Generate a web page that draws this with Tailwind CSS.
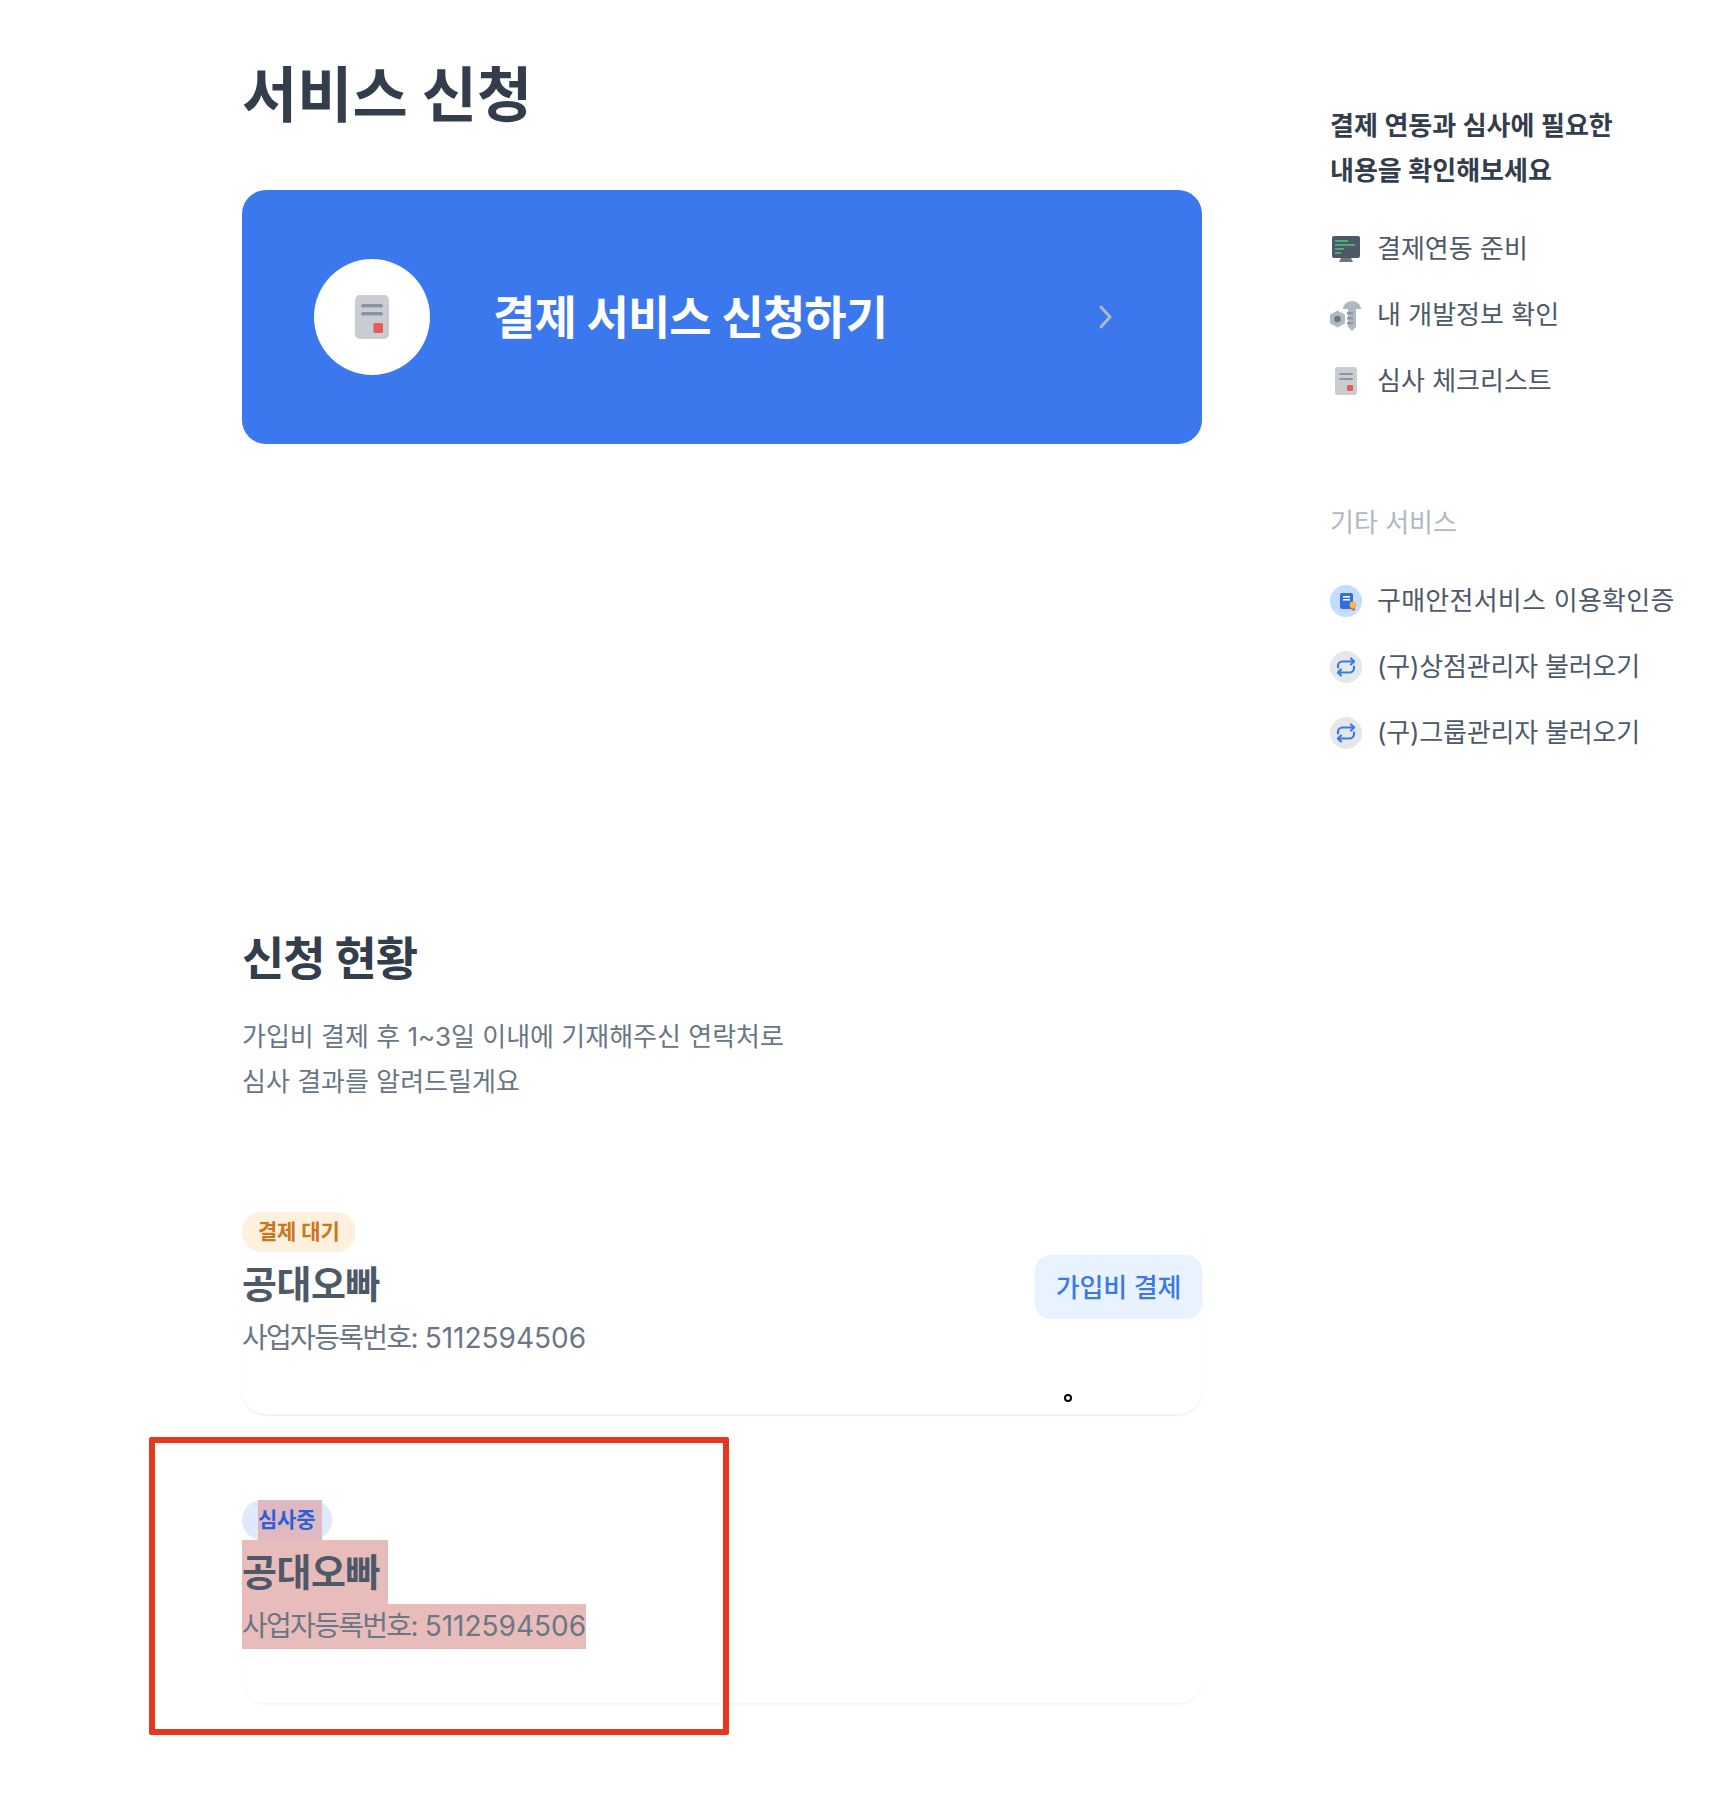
<!DOCTYPE html>
<html lang="ko">
<head>
<meta charset="utf-8">
<script src="https://cdn.jsdelivr.net/npm/@tailwindcss/browser@4"></script>
<title>서비스 신청</title>
</head>
<body class="bg-white font-['Inter','Noto_Sans_CJK_KR',sans-serif]">
<div class="relative w-[1712px] h-[1808px] overflow-hidden flex">
  <main class="ml-[242px] w-[960px] flex flex-col">
    <h1 class="mt-[50px] h-[90px] text-[60px] leading-[90px] font-bold text-[#333d4b]">서비스 신청</h1>
    <a class="mt-[50px] h-[254px] rounded-[24px] bg-[#3b78ee] flex items-center pl-[72px] pr-[89px]">
      <span class="w-[116px] h-[116px] rounded-full bg-white flex items-center justify-center shrink-0">
        <svg class="w-[34px] h-[44px]" viewBox="0 0 34 44"><rect width="34" height="44" rx="5" fill="#c9cdd2"/><rect x="6" y="9" width="22" height="3.500" rx="1.700" fill="#8b95a1"/><rect x="6" y="17" width="22" height="3.500" rx="1.700" fill="#8b95a1"/><rect x="18.500" y="28" width="9.500" height="10" rx="1.500" fill="#e85c54"/></svg>
      </span>
      <span class="ml-[63px] flex-1 text-[46px] leading-[64px] font-semibold text-white tracking-[-0.9px]">결제 서비스 신청하기</span>
      <svg class="w-[14px] h-[24px]" viewBox="0 0 14 24"><path d="M2 2l9 10-9 10" fill="none" stroke="#b0b8c1" stroke-width="3" stroke-linecap="round" stroke-linejoin="round"/></svg>
    </a>
    <h2 class="mt-[478px] h-[72px] text-[46px] leading-[72px] font-bold text-[#333d4b] tracking-[-1px]">신청 현황</h2>
    <p class="mt-[20px] text-[26px] leading-[45px] text-[#6b7684]">가입비 결제 후 1~3일 이내에 기재해주신 연락처로<br>심사 결과를 알려드릴게요</p>
    <section class="mt-[108px] h-[202px] rounded-[24px] shadow-[0_2px_2px_rgba(0,0,0,0.06)] flex items-center justify-between">
      <div class="self-start flex flex-col items-start">
        <span class="h-[40px] px-[16px] rounded-[20px] bg-[#fdf0dc] text-[21px] leading-[40px] font-semibold text-[#c9771f] tracking-[-0.2px]">결제 대기</span>
        <strong class="h-[64px] text-[38px] leading-[64px] font-semibold text-[#4e5968] tracking-[-0.5px]">공대오빠</strong>
        <span class="h-[45px] text-[28px] leading-[45px] text-[#6b7684]"><span class="tracking-[-1.700px]">사업자등록번호:</span> <span>5112594506</span></span>
      </div>
      <button class="self-start mt-[43px] w-[167px] h-[64px] rounded-[16px] bg-[#e8f3ff] text-[26px] font-medium text-[#3b78ee] tracking-[-0.2px]">가입비 결제</button>
    </section>
    <section class="mt-[86px] h-[203px] rounded-[24px] shadow-[0_2px_2px_rgba(0,0,0,0.04)] flex">
      <div class="flex flex-col items-start">
        <span class="h-[40px] pl-[16px] pr-[10px] rounded-[20px] bg-[#dfe9fb] text-[21px] leading-[40px] font-semibold text-[#2f5fd6] tracking-[-0.2px]"><span class="inline-block w-[64px] bg-[#dfb9c2]">심사중</span></span>
        <strong class="h-[64px] bg-[#e9bcbc] pr-[8px] text-[38px] leading-[64px] font-semibold text-[#4e5968] tracking-[-0.5px]">공대오빠</strong>
        <span class="h-[45px] bg-[#e9bcbc] text-[28px] leading-[45px] text-[#6b7684]"><span class="tracking-[-1.700px]">사업자등록번호:</span> <span>5112594506</span></span>
      </div>
    </section>
  </main>
  <aside class="ml-[128px] w-[360px] flex flex-col">
    <p class="mt-[103px] text-[26px] leading-[45px] font-semibold text-[#333d4b]">결제 연동과 심사에 필요한<br>내용을 확인해보세요</p>
    <ul class="mt-[36px] flex flex-col gap-[26px] text-[26px] leading-[40px] text-[#4e5968]">
      <li class="flex items-center gap-[15px]">
        <svg class="w-[32px] h-[32px]" viewBox="0 0 32 32"><rect x="2" y="3" width="28" height="22" rx="2" fill="#4e5968"/><path d="M11 25h10l2 4H9z" fill="#6b7684"/><rect x="5" y="7" width="13" height="1.800" fill="#4fb37c"/><rect x="5" y="11" width="20" height="1.800" fill="#4fb37c"/><rect x="5" y="15" width="9" height="1.800" fill="#4fb37c"/><rect x="5" y="19" width="6" height="1.800" fill="#4fb37c"/></svg>
        결제연동 준비</li>
      <li class="flex items-center gap-[15px]">
        <svg class="w-[32px] h-[32px]" viewBox="0 0 32 32"><path d="M7.500 11.500l7.500 4.200v8.600l-7.500 4.200L0 24.300v-8.600z" fill="#b0b8c1"/><circle cx="7.500" cy="20" r="3.200" fill="#6b7684"/><path d="M13 10c0-5 5-8 9-8s9 3 9 8z" fill="#b0b8c1"/><path d="M18 10h8v18l-4 4-4-4z" fill="#b0b8c1"/><rect x="17" y="13" width="6" height="2.400" fill="#8b95a1"/><rect x="17" y="18" width="6" height="2.400" fill="#8b95a1"/><rect x="17" y="23" width="6" height="2.400" fill="#8b95a1"/></svg>
        내 개발정보 확인</li>
      <li class="flex items-center gap-[15px]">
        <svg class="w-[32px] h-[32px]" viewBox="0 0 32 32"><rect x="5" y="2" width="22" height="28" rx="3" fill="#c9cdd2"/><rect x="9" y="8" width="14" height="2" rx="1" fill="#8b95a1"/><rect x="9" y="13" width="14" height="2" rx="1" fill="#8b95a1"/><rect x="17" y="20" width="6" height="6" rx="1" fill="#e85c54"/></svg>
        심사 체크리스트</li>
    </ul>
    <p class="mt-[102px] text-[26px] leading-[40px] text-[#b0b8c1]">기타 서비스</p>
    <ul class="mt-[38px] flex flex-col gap-[26px] text-[26px] leading-[40px] text-[#4e5968]">
      <li class="flex items-center gap-[15px] tracking-[0.25px]">
        <svg class="w-[32px] h-[32px]" viewBox="0 0 32 32"><circle cx="16" cy="16" r="16" fill="#c4dcff"/><rect x="10" y="8" width="13" height="16" rx="2" fill="#2f6fe4"/><rect x="13" y="11" width="7" height="1.600" fill="#fff"/><rect x="13" y="14" width="7" height="1.600" fill="#fff"/><path d="M21.500 22h3.500v3.500h-3.500z" fill="#e85c54"/><circle cx="23" cy="20" r="3.400" fill="#f5b53f"/></svg>
        구매안전서비스 이용확인증</li>
      <li class="flex items-center gap-[15px] tracking-[-0.2px]">
        <svg class="w-[32px] h-[32px]" viewBox="0 0 32 32"><circle cx="16" cy="16" r="16" fill="#e5e8eb"/><g fill="none" stroke="#3b78ee" stroke-width="2.200" stroke-linecap="round" stroke-linejoin="round"><path d="M8 16.500v-1.500a4.500 4.500 0 0 1 4.500-4.500H24"/><path d="M21 7.500l3 3-3 3"/><path d="M24 15.500v1.500a4.500 4.500 0 0 1-4.500 4.500H8"/><path d="M11 24.500l-3-3 3-3"/></g></svg>
        (구)상점관리자 불러오기</li>
      <li class="flex items-center gap-[15px] tracking-[-0.2px]">
        <svg class="w-[32px] h-[32px]" viewBox="0 0 32 32"><circle cx="16" cy="16" r="16" fill="#e5e8eb"/><g fill="none" stroke="#3b78ee" stroke-width="2.200" stroke-linecap="round" stroke-linejoin="round"><path d="M8 16.500v-1.500a4.500 4.500 0 0 1 4.500-4.500H24"/><path d="M21 7.500l3 3-3 3"/><path d="M24 15.500v1.500a4.500 4.500 0 0 1-4.500 4.500H8"/><path d="M11 24.500l-3-3 3-3"/></g></svg>
        (구)그룹관리자 불러오기</li>
    </ul>
  </aside>
  <div class="absolute left-[149px] top-[1437px] w-[580px] h-[298px] border-[6px] border-[#e5361f] rounded-[2px]"></div>
  <div class="absolute left-[1064px] top-[1394px] w-[8px] h-[8px] rounded-full border-2 border-black bg-white"></div>
</div>
</body>
</html>
